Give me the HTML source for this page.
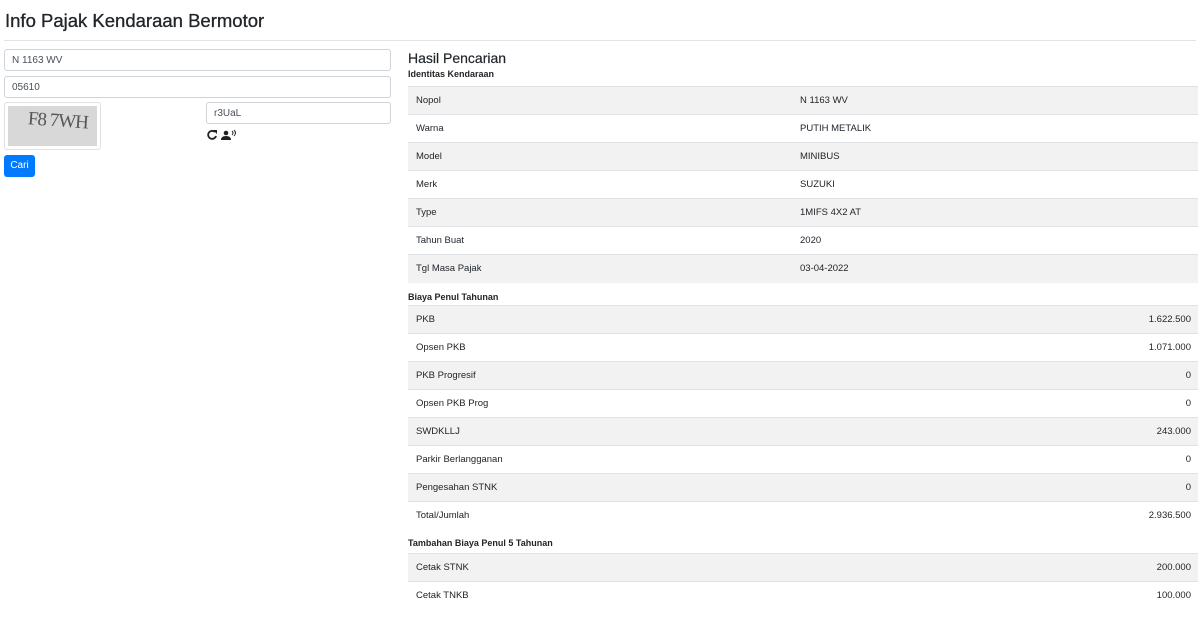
<!DOCTYPE html>
<html><head><meta charset="utf-8"><style>
*{box-sizing:border-box}
body{margin:0;font-family:"Liberation Sans",sans-serif;color:#212529;background:#fff;font-size:10px;overflow:hidden}
h1{font-size:18.5px;font-weight:500;margin:0;position:absolute;left:5px;top:10px;-webkit-text-stroke:0.3px #212529}
.hr{position:absolute;left:4px;right:4px;top:40px;border-top:1px solid #e3e3e3}
.in{position:absolute;border:1px solid #ced4da;border-radius:3px;height:22px;padding:5px 7px;font-size:10px;color:#495057}
.cap{position:absolute;left:4px;top:102px;width:97px;height:48px;border:1px solid #dee2e6;border-radius:3px;padding:3px}
.cap div{width:100%;height:100%;background:#d8d8d8;overflow:hidden}
.cap span{display:block;font-family:"Liberation Serif",serif;font-size:19px;color:#555;padding:4px 0 0 20px;letter-spacing:-1px;transform:rotate(4deg)}
.btn{position:absolute;left:4px;top:155px;width:31px;height:22px;background:#007bff;border-radius:3px;color:#fff;font-size:10px;text-align:center;line-height:22px}
.right{position:absolute;left:408px;top:50px;width:790px}
h2{font-size:14px;font-weight:500;margin:0 0 3px;-webkit-text-stroke:0.2px #212529}
h6{font-size:9px;font-weight:700;margin:0;height:17px}
table{width:100%;border-collapse:collapse;margin-bottom:9px}
td{height:28px;border-top:1px solid #dee2e6;padding:0 8px;font-size:9.5px;vertical-align:middle}
tr:nth-child(odd) td{background:#f2f2f2}
td.r{text-align:right;padding-right:7px}
</style></head><body>
<h1>Info Pajak Kendaraan Bermotor</h1>
<div class="hr"></div>
<div class="in" style="left:4px;top:49px;width:387px">N 1163 WV</div>
<div class="in" style="left:4px;top:76px;width:387px">05610</div>
<div class="cap"><div><span>F8 7WH</span></div></div>
<div class="in" style="left:206px;top:102px;width:185px">r3UaL</div>
<svg style="position:absolute;left:207px;top:129px" width="32" height="12" viewBox="0 0 32 12"><path d="M8 3A4 4 0 1 0 9 7" fill="none" stroke="#222" stroke-width="1.8"/><path d="M6 1h4v4z" fill="#222"/><circle cx="19" cy="4" r="2.3" fill="#222"/><path d="M14 11q0-4 5-4t5 4z" fill="#222"/><path d="M25 2q2 2 0 4M27 1q3 3 0 6" fill="none" stroke="#222" stroke-width="1"/></svg>
<div class="btn">Cari</div>
<div class="right">
<h2>Hasil Pencarian</h2>
<h6>Identitas Kendaraan</h6>
<table>
<tr><td style="width:384px">Nopol</td><td>N 1163 WV</td></tr>
<tr><td>Warna</td><td>PUTIH METALIK</td></tr>
<tr><td>Model</td><td>MINIBUS</td></tr>
<tr><td>Merk</td><td>SUZUKI</td></tr>
<tr><td>Type</td><td>1MIFS 4X2 AT</td></tr>
<tr><td>Tahun Buat</td><td>2020</td></tr>
<tr><td>Tgl Masa Pajak</td><td>03-04-2022</td></tr>
</table>
<h6 style="height:13px">Biaya Penul Tahunan</h6>
<table>
<tr><td>PKB</td><td class="r">1.622.500</td></tr>
<tr><td>Opsen PKB</td><td class="r">1.071.000</td></tr>
<tr><td>PKB Progresif</td><td class="r">0</td></tr>
<tr><td>Opsen PKB Prog</td><td class="r">0</td></tr>
<tr><td>SWDKLLJ</td><td class="r">243.000</td></tr>
<tr><td>Parkir Berlangganan</td><td class="r">0</td></tr>
<tr><td>Pengesahan STNK</td><td class="r">0</td></tr>
<tr><td>Total/Jumlah</td><td class="r">2.936.500</td></tr>
</table>
<h6 style="height:15px">Tambahan Biaya Penul 5 Tahunan</h6>
<table>
<tr><td>Cetak STNK</td><td class="r">200.000</td></tr>
<tr><td>Cetak TNKB</td><td class="r">100.000</td></tr>
</table>
</div>
</body></html>
